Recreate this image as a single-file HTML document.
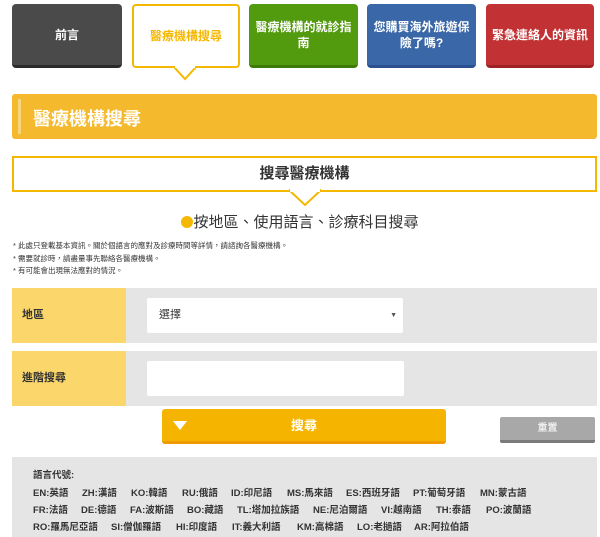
<!DOCTYPE html>
<html><head><meta charset="utf-8"><style>
*{margin:0;padding:0;box-sizing:border-box}
body{width:600px;height:532px;overflow:hidden;background:#fff;font-family:"Liberation Sans","Noto Sans CJK TC",sans-serif;color:#333;position:relative}
.a{position:absolute}
.tab{position:absolute;top:4px;height:64px;border-radius:4px;color:#fff;font-weight:bold;font-size:12px;display:flex;align-items:center;justify-content:center;text-align:center;line-height:16px;padding:0 6px}
.l{position:absolute;font-size:9.5px;font-weight:bold;color:#333;white-space:nowrap}
</style></head><body>
<div class="tab" style="left:12px;width:110px;background:#4a4a4a;border-bottom:3px solid #2b2b2b">前言</div>
<div class="tab" style="left:132px;width:108px;background:#fff;border:2px solid #f5b800;color:#f5b800">醫療機構搜尋</div>
<svg class="a" style="left:174px;top:66px" width="22" height="15"><polygon points="0,1 22,1 11,13" fill="#fff" stroke="#f5b800" stroke-width="2"/><rect x="1" y="0" width="20" height="2" fill="#fff"/></svg>
<div class="tab" style="left:249px;width:109px;background:#529a0e;border-bottom:3px solid #3c7a08">醫療機構的就診指南</div>
<div class="tab" style="left:367px;width:109px;background:#3a67a8;border-bottom:3px solid #2a5090">您購買海外旅遊保險了嗎?</div>
<div class="tab" style="left:486px;width:108px;background:#c23234;border-bottom:3px solid #9e2224">緊急連絡人的資訊</div>

<div class="a" style="left:12px;top:94px;width:585px;height:45px;background:#f4b92c;border-radius:3px"></div>
<div class="a" style="left:18px;top:99px;width:3px;height:35px;background:#f8d47a"></div>
<div class="a" style="left:33px;top:105px;color:#fff;font-size:18px;font-weight:bold">醫療機構搜尋</div>

<div class="a" style="left:12px;top:156px;width:585px;height:36px;border:2px solid #f5b800;text-align:center;font-size:15px;font-weight:bold;line-height:32px;color:#333">搜尋醫療機構</div>
<svg class="a" style="left:289px;top:189px" width="32" height="17"><polygon points="0,1 32,1 16,16" fill="#fff" stroke="#f5b800" stroke-width="2"/><rect x="1" y="0" width="30" height="3" fill="#fff"/></svg>
<div class="a" style="left:0;top:211px;width:600px;text-align:center;font-size:15px;color:#333"><span style="display:inline-block;width:12px;height:12px;border-radius:50%;background:#f5b800;vertical-align:-1px"></span>按地區、使用語言、診療科目搜尋</div>
<div class="a" style="left:13px;top:240px;font-size:7.5px;line-height:12.5px;color:#333">* 此處只登載基本資訊。關於個語言的應對及診療時間等詳情，請諮詢各醫療機構。<br>* 需要就診時，請盡量事先聯絡各醫療機構。<br>* 有可能會出現無法應對的情況。</div>

<div class="a" style="left:12px;top:288px;width:585px;height:55px;background:#e5e5e5"></div>
<div class="a" style="left:12px;top:288px;width:114px;height:55px;background:#fad66b;font-size:11px;font-weight:bold;line-height:55px;padding-left:10px">地區</div>
<div class="a" style="left:147px;top:298px;width:256px;height:35px;background:#fff;border-radius:2px;font-size:11px;line-height:35px;padding-left:12px">選擇<span style="position:absolute;right:6px;font-size:7px;color:#555">▼</span></div>
<div class="a" style="left:12px;top:351px;width:585px;height:55px;background:#e5e5e5"></div>
<div class="a" style="left:12px;top:351px;width:114px;height:55px;background:#fad66b;font-size:11px;font-weight:bold;line-height:55px;padding-left:10px">進階搜尋</div>
<div class="a" style="left:147px;top:361px;width:257px;height:35px;background:#fff;border-radius:2px"></div>

<div class="a" style="left:162px;top:409px;width:284px;height:35px;background:#f5b400;border-bottom:3px solid #ee9a00;border-radius:3px;color:#fff;font-weight:bold;font-size:13px;text-align:center;line-height:33px">搜尋</div>
<svg class="a" style="left:173px;top:421px" width="14" height="10"><polygon points="0,0 14,0 7,9" fill="#fff"/></svg>
<div class="a" style="left:500px;top:417px;width:95px;height:26px;background:#a8a8a8;border-bottom:3px solid #7a7a7a;border-radius:2px;color:#eee;font-weight:bold;font-size:10px;text-align:center;line-height:23px">重置</div>

<div class="a" style="left:12px;top:457px;width:585px;height:80px;background:#e5e5e5"></div>
<div class="l" style="left:33px;top:467px">語言代號:</div>
<div class="l" style="left:33px;top:485px">EN:英語</div><div class="l" style="left:82px;top:485px">ZH:漢語</div><div class="l" style="left:131px;top:485px">KO:韓語</div><div class="l" style="left:182px;top:485px">RU:俄語</div><div class="l" style="left:231px;top:485px">ID:印尼語</div><div class="l" style="left:287px;top:485px">MS:馬來語</div><div class="l" style="left:346px;top:485px">ES:西班牙語</div><div class="l" style="left:413px;top:485px">PT:葡萄牙語</div><div class="l" style="left:480px;top:485px">MN:蒙古語</div>
<div class="l" style="left:33px;top:502px">FR:法語</div><div class="l" style="left:81px;top:502px">DE:德語</div><div class="l" style="left:130px;top:502px">FA:波斯語</div><div class="l" style="left:187px;top:502px">BO:藏語</div><div class="l" style="left:237px;top:502px">TL:塔加拉族語</div><div class="l" style="left:313px;top:502px">NE:尼泊爾語</div><div class="l" style="left:381px;top:502px">VI:越南語</div><div class="l" style="left:436px;top:502px">TH:泰語</div><div class="l" style="left:486px;top:502px">PO:波蘭語</div>
<div class="l" style="left:33px;top:519px">RO:羅馬尼亞語</div><div class="l" style="left:111px;top:519px">SI:僧伽羅語</div><div class="l" style="left:176px;top:519px">HI:印度語</div><div class="l" style="left:232px;top:519px">IT:義大利語</div><div class="l" style="left:297px;top:519px">KM:高棉語</div><div class="l" style="left:357px;top:519px">LO:老撾語</div><div class="l" style="left:414px;top:519px">AR:阿拉伯語</div>
</body></html>
